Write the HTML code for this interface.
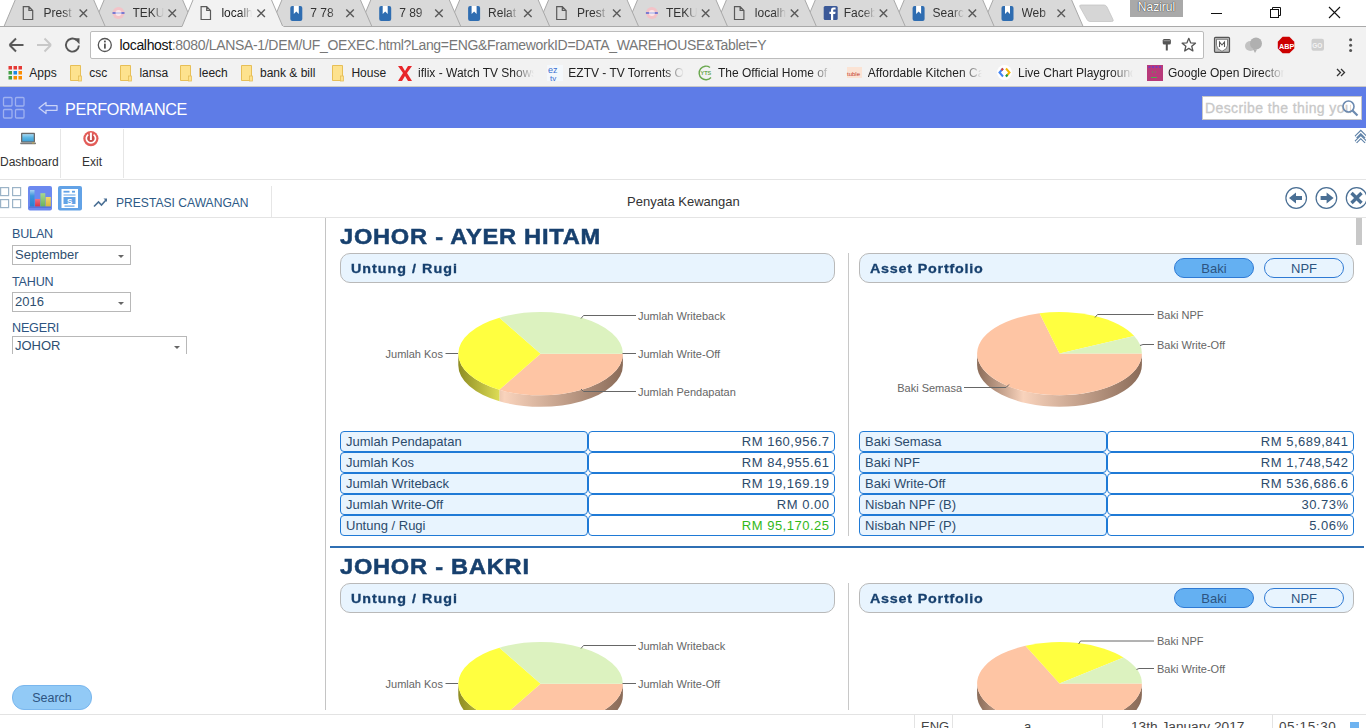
<!DOCTYPE html><html><head><meta charset="utf-8"><style>*{box-sizing:border-box;margin:0;padding:0}
html,body{width:1366px;height:728px;overflow:hidden;background:#fff;font-family:"Liberation Sans",sans-serif;position:relative}
.a{position:absolute}
#tabs{position:absolute;left:0;top:0;width:1366px;height:27px;background:#fff}
.tt{position:absolute;top:6px;font-size:12px;color:#333;white-space:nowrap;overflow:hidden;-webkit-mask-image:linear-gradient(to right,#000 62%,transparent 100%)}
.tx{position:absolute;top:8px}
#toolbar{position:absolute;left:0;top:27px;width:1366px;height:60px;background:#f2f2f2;border-bottom:1px solid #c9c9c9}
#omni{position:absolute;left:90px;top:31px;width:1114px;height:28px;background:#fff;border:1px solid #bcbcbc;border-radius:2px}
.bm{position:absolute;top:66px;font-size:12px;color:#222;white-space:nowrap}
.fold{position:absolute;top:66px;width:12px;height:14px;background:#fbe08a;border:1px solid #e0b84a;border-radius:1px}
#hdr{position:absolute;left:0;top:87px;width:1366px;height:41px;background:#5e7ce7}
#tb2{position:absolute;left:0;top:128px;width:1366px;height:52px;background:#fff;border-bottom:1px solid #e4e4e4}
#bar{position:absolute;left:0;top:180px;width:1366px;height:38px;background:#fff;border-bottom:1px solid #e4e4e4}
#left{position:absolute;left:0;top:218px;width:326px;height:492px;background:#fff;border-right:1px solid #c4c4c4}
#status{position:absolute;left:0;top:714px;width:1366px;height:14px;background:#fff;border-top:1px solid #e3e3e3;overflow:hidden}
.lbl{position:absolute;left:12px;font-size:12.6px;letter-spacing:-0.2px;color:#2d5481;white-space:nowrap}
.sel{position:absolute;left:12px;height:20px;border:1px solid #b8b8b8;background:#fff;font-size:13px;color:#2f4f70;padding:1px 0 0 2px;white-space:nowrap}
.sel:after{content:"";position:absolute;right:6px;top:9px;border-left:3px solid transparent;border-right:3px solid transparent;border-top:3px solid #666}
.ttl{position:absolute;font-size:21.5px;font-weight:bold;color:#17406e;white-space:nowrap;letter-spacing:0.68px;line-height:25px;-webkit-text-stroke:0.5px #17406e;transform:scaleX(1.1);transform-origin:0 0}
.ph{position:absolute;height:30px;background:#e8f4fe;border:1px solid #b9b9b9;border-radius:10px}
.ph span{position:absolute;top:7px;font-size:13px;font-weight:bold;color:#17406e;white-space:nowrap;letter-spacing:0.6px;line-height:15px;-webkit-text-stroke:0.3px #17406e;transform:scaleX(1.1);transform-origin:0 0}
.bt{position:absolute;top:4px;width:80px;height:20px;border:1px solid #2f7ad4;border-radius:10px;font-size:13px;color:#2d5481;text-align:center;line-height:20px;background:transparent}
.bt.on{background:#64b0f2}
.vdiv{position:absolute;width:1px;background:#c8c8c8}
.cell{position:absolute;height:21px;border:1px solid #1f7ad6;border-radius:4px;font-size:13px;color:#2c4b6c;padding:0 0 0 5px;line-height:19px;white-space:nowrap}
.cl{background:#e8f4fe}
.cr{background:#fff;text-align:right;padding:0 4.5px 0 0;letter-spacing:0.5px}
.cr.g{color:#32b81a}
.pl{position:absolute;font-size:11px;color:#666;white-space:nowrap;line-height:13px}
#content{position:absolute;left:0;top:0;width:1366px;height:710px;overflow:hidden}
</style></head><body>
<div id="tabs"></div><div id="toolbar"></div>
<svg class="a" style="left:0;top:0" width="1366" height="27"><path d="M981.9,26.5 L993.5,-1 L1071.2,-1 L1083.1,26.5" fill="#d9d9d9" stroke="#a9a9a9" stroke-width="1"/><path d="M893.0,26.5 L904.6,-1 L982.3,-1 L994.2,26.5" fill="#d9d9d9" stroke="#a9a9a9" stroke-width="1"/><path d="M804.1,26.5 L815.7,-1 L893.4,-1 L905.3,26.5" fill="#d9d9d9" stroke="#a9a9a9" stroke-width="1"/><path d="M715.2,26.5 L726.8,-1 L804.5,-1 L816.4,26.5" fill="#d9d9d9" stroke="#a9a9a9" stroke-width="1"/><path d="M626.3,26.5 L637.9,-1 L715.6,-1 L727.5,26.5" fill="#d9d9d9" stroke="#a9a9a9" stroke-width="1"/><path d="M537.4,26.5 L549.0,-1 L626.7,-1 L638.6,26.5" fill="#d9d9d9" stroke="#a9a9a9" stroke-width="1"/><path d="M448.5,26.5 L460.1,-1 L537.8,-1 L549.7,26.5" fill="#d9d9d9" stroke="#a9a9a9" stroke-width="1"/><path d="M359.6,26.5 L371.2,-1 L448.9,-1 L460.8,26.5" fill="#d9d9d9" stroke="#a9a9a9" stroke-width="1"/><path d="M270.7,26.5 L282.3,-1 L360.0,-1 L371.9,26.5" fill="#d9d9d9" stroke="#a9a9a9" stroke-width="1"/><path d="M92.9,26.5 L104.5,-1 L182.2,-1 L194.1,26.5" fill="#d9d9d9" stroke="#a9a9a9" stroke-width="1"/><path d="M4.0,26.5 L15.6,-1 L93.3,-1 L105.2,26.5" fill="#d9d9d9" stroke="#a9a9a9" stroke-width="1"/><line x1="0" y1="26.5" x2="1366" y2="26.5" stroke="#a9a9a9" stroke-width="1"/><path d="M181.8,27 L193.4,-1 L271.1,-1 L283.0,27 Z" fill="#f2f2f2" stroke="#a9a9a9" stroke-width="1"/><rect x="182.4" y="26" width="101" height="2" fill="#f2f2f2"/><path d="M1081,5 L1104,5 Q1106,5 1107,7 L1113,19.5 Q1114,21.5 1111.5,21.5 L1090,21.5 Q1088,21.5 1087,19.5 L1080,7 Q1079,5 1081,5 Z" fill="#d6d6d6" stroke="#c4c4c4" stroke-width="0.8"/><path d="M23.3,6.6 h5.6 l3.8,3.8 v9.1 h-9.4 Z M28.9,6.6 v3.8 h3.8" fill="none" stroke="#5a5a5a" stroke-width="1.2"/><path d="M79.6,9.5 l7.5,7.5 M87.1,9.5 l-7.5,7.5" stroke="#5a5a5a" stroke-width="1.4"/><circle cx="118.5" cy="13" r="6" fill="#f3c3c8"/><path d="M112.5,13 h12" stroke="#7a7ad0" stroke-width="2"/><circle cx="118.5" cy="13" r="3" fill="#fff" opacity="0.6"/><path d="M168.5,9.5 l7.5,7.5 M176.0,9.5 l-7.5,7.5" stroke="#5a5a5a" stroke-width="1.4"/><path d="M201.1,6.6 h5.6 l3.8,3.8 v9.1 h-9.4 Z M206.7,6.6 v3.8 h3.8" fill="none" stroke="#5a5a5a" stroke-width="1.2"/><path d="M257.4,9.5 l7.5,7.5 M264.9,9.5 l-7.5,7.5" stroke="#5a5a5a" stroke-width="1.4"/><rect x="290.3" y="6" width="12" height="15" rx="2" fill="#2f6db1"/><path d="M293.8,6 v8 l2.5,-2.5 l2.5,2.5 v-8" fill="#fff"/><path d="M346.3,9.5 l7.5,7.5 M353.8,9.5 l-7.5,7.5" stroke="#5a5a5a" stroke-width="1.4"/><rect x="379.2" y="6" width="12" height="15" rx="2" fill="#2f6db1"/><path d="M382.7,6 v8 l2.5,-2.5 l2.5,2.5 v-8" fill="#fff"/><path d="M435.2,9.5 l7.5,7.5 M442.7,9.5 l-7.5,7.5" stroke="#5a5a5a" stroke-width="1.4"/><rect x="468.1" y="6" width="12" height="15" rx="2" fill="#2f6db1"/><path d="M471.6,6 v8 l2.5,-2.5 l2.5,2.5 v-8" fill="#fff"/><path d="M524.1,9.5 l7.5,7.5 M531.6,9.5 l-7.5,7.5" stroke="#5a5a5a" stroke-width="1.4"/><path d="M556.7,6.6 h5.6 l3.8,3.8 v9.1 h-9.4 Z M562.3,6.6 v3.8 h3.8" fill="none" stroke="#5a5a5a" stroke-width="1.2"/><path d="M613.0,9.5 l7.5,7.5 M620.5,9.5 l-7.5,7.5" stroke="#5a5a5a" stroke-width="1.4"/><circle cx="651.9" cy="13" r="6" fill="#f3c3c8"/><path d="M645.9,13 h12" stroke="#7a7ad0" stroke-width="2"/><circle cx="651.9" cy="13" r="3" fill="#fff" opacity="0.6"/><path d="M701.9,9.5 l7.5,7.5 M709.4,9.5 l-7.5,7.5" stroke="#5a5a5a" stroke-width="1.4"/><path d="M734.5,6.6 h5.6 l3.8,3.8 v9.1 h-9.4 Z M740.1,6.6 v3.8 h3.8" fill="none" stroke="#5a5a5a" stroke-width="1.2"/><path d="M790.8,9.5 l7.5,7.5 M798.3,9.5 l-7.5,7.5" stroke="#5a5a5a" stroke-width="1.4"/><rect x="823.7" y="6" width="14" height="14" rx="1.5" fill="#3b5998"/><path d="M833.2,20 v-6 h2 l0.4,-2.2 h-2.4 v-1.4 c0,-0.7 0.3,-1 1,-1 h1.4 v-2 h-2 c-2,0 -2.6,1.2 -2.6,2.8 v1.6 h-1.6 v2.2 h1.6 v6 Z" fill="#fff"/><path d="M879.7,9.5 l7.5,7.5 M887.2,9.5 l-7.5,7.5" stroke="#5a5a5a" stroke-width="1.4"/><rect x="912.6" y="6" width="12" height="15" rx="2" fill="#2f6db1"/><path d="M916.1,6 v8 l2.5,-2.5 l2.5,2.5 v-8" fill="#fff"/><path d="M968.6,9.5 l7.5,7.5 M976.1,9.5 l-7.5,7.5" stroke="#5a5a5a" stroke-width="1.4"/><rect x="1001.5" y="6" width="12" height="15" rx="2" fill="#2f6db1"/><path d="M1005.0,6 v8 l2.5,-2.5 l2.5,2.5 v-8" fill="#fff"/><path d="M1057.5,9.5 l7.5,7.5 M1065.0,9.5 l-7.5,7.5" stroke="#5a5a5a" stroke-width="1.4"/><rect x="1130" y="0" width="53" height="17" fill="#a9a9a9"/><path d="M1211,13.5 h11" stroke="#111" stroke-width="1"/><rect x="1270.5" y="9.5" width="8" height="8" fill="none" stroke="#111"/><path d="M1272.5,9.5 v-2 h8 v8 h-2" fill="none" stroke="#111"/><path d="M1329,7 l11,11 M1340,7 l-11,11" stroke="#111" stroke-width="1.1"/></svg>
<div class="tt" style="left:43.6px;width:31px;color:#333">Prest</div>
<div class="tt" style="left:132.5px;width:31px;color:#333">TEKU</div>
<div class="tt" style="left:221.4px;width:31px;color:#222">localh</div>
<div class="tt" style="left:310.3px;width:31px;color:#333">7 78</div>
<div class="tt" style="left:399.2px;width:31px;color:#333">7 89</div>
<div class="tt" style="left:488.1px;width:31px;color:#333">Relat</div>
<div class="tt" style="left:577.0px;width:31px;color:#333">Prest</div>
<div class="tt" style="left:665.9px;width:31px;color:#333">TEKU</div>
<div class="tt" style="left:754.8px;width:31px;color:#333">localh</div>
<div class="tt" style="left:843.7px;width:31px;color:#333">Faceb</div>
<div class="tt" style="left:932.6px;width:31px;color:#333">Searc</div>
<div class="tt" style="left:1021.5px;width:31px;color:#333">Web</div>
<div class="a" style="left:1130px;top:1px;width:53px;text-align:center;font-size:12px;line-height:13px;color:#fff;white-space:nowrap;text-shadow:0 0 1px #333,0 0 1px #333">Nazirul</div>
<svg class="a" style="left:0;top:27px" width="1366" height="60"><path d="M9.5,18 h14 M9.5,18 l6.5,-6.5 M9.5,18 l6.5,6.5" stroke="#5a5a5a" stroke-width="2" fill="none"/><path d="M37,18 h14 M51,18 l-6.5,-6.5 M51,18 l-6.5,6.5" stroke="#c8c8c8" stroke-width="2" fill="none"/><path d="M78.9,18.5 A6.5,6.5 0 1 1 76.5,13" stroke="#555" stroke-width="1.9" fill="none"/><path d="M73.6,11.3 h5.9 v5.9 Z" fill="#555"/></svg>
<div id="omni"></div>
<svg class="a" style="left:0;top:27px" width="1366" height="60"><circle cx="104.8" cy="18" r="6.5" fill="none" stroke="#555" stroke-width="1.3"/><rect x="104" y="16.6" width="1.8" height="5" fill="#555"/><rect x="104" y="13.6" width="1.8" height="1.8" fill="#555"/><rect x="1162.7" y="12" width="8.2" height="5.5" rx="1.5" fill="#555"/><rect x="1165.8" y="17" width="2" height="6.5" fill="#555"/><rect x="1163.5" y="13.2" width="6.5" height="1" fill="#999"/><polygon points="1188.80,11.30 1190.62,15.79 1195.46,16.14 1191.75,19.26 1192.91,23.96 1188.80,21.40 1184.69,23.96 1185.85,19.26 1182.14,16.14 1186.98,15.79" fill="none" stroke="#555" stroke-width="1.3" stroke-linejoin="round"/><rect x="1214.5" y="10.3" width="15" height="15" rx="1" fill="#bbb" stroke="#555" stroke-width="1.2"/><path d="M1216.5,12.3 h11 v6 q0,4 -5.5,6 q-5.5,-2 -5.5,-6 Z" fill="#fff" stroke="#666" stroke-width="0.8"/><path d="M1219.5,20 v-5 l2.5,3 l2.5,-3 v5" stroke="#555" fill="none" stroke-width="1.1"/><ellipse cx="1250.5" cy="19" rx="5.5" ry="5" fill="#c2c2c2"/><circle cx="1256" cy="16.5" r="6" fill="#b0b0b0"/><path d="M1253,22 l2,4 l2,-3.5 Z" fill="#b0b0b0"/><polygon points="1282.6,9.8 1289.4,9.8 1294.3,14.7 1294.3,21.5 1289.4,26.3 1282.6,26.3 1277.8,21.5 1277.8,14.7" fill="#cc0000"/><text x="1279" y="21.5" font-size="7.2" font-weight="bold" fill="#fff" font-family="Liberation Sans">ABP</text><rect x="1311.5" y="11.8" width="12.5" height="12" rx="2" fill="#cfcfcf"/><text x="1312.3" y="20.5" font-size="6.5" font-weight="bold" fill="#f4f4f4" font-family="Liberation Sans">GO</text><circle cx="1350.6" cy="12.7" r="1.5" fill="#555"/><circle cx="1350.6" cy="18.2" r="1.5" fill="#555"/><circle cx="1350.6" cy="23.4" r="1.5" fill="#555"/><rect x="8.5" y="39" width="3.5" height="3.5" fill="#e53935"/><rect x="13.5" y="39" width="3.5" height="3.5" fill="#e53935"/><rect x="18.5" y="39" width="3.5" height="3.5" fill="#e53935"/><rect x="8.5" y="44" width="3.5" height="3.5" fill="#43a047"/><rect x="13.5" y="44" width="3.5" height="3.5" fill="#1e88e5"/><rect x="18.5" y="44" width="3.5" height="3.5" fill="#fb8c00"/><rect x="8.5" y="49" width="3.5" height="3.5" fill="#43a047"/><rect x="13.5" y="49" width="3.5" height="3.5" fill="#fb8c00"/><rect x="18.5" y="49" width="3.5" height="3.5" fill="#fb8c00"/><path d="M70.5,38.5 h10 v15 h-10 Z" fill="#fde28e" stroke="#e7bf57" stroke-width="1"/><rect x="78.5" y="49" width="3" height="5" fill="#fde28e" stroke="#e7bf57" stroke-width="0.8"/><path d="M120.5,38.5 h10 v15 h-10 Z" fill="#fde28e" stroke="#e7bf57" stroke-width="1"/><rect x="128.5" y="49" width="3" height="5" fill="#fde28e" stroke="#e7bf57" stroke-width="0.8"/><path d="M180.5,38.5 h10 v15 h-10 Z" fill="#fde28e" stroke="#e7bf57" stroke-width="1"/><rect x="188.5" y="49" width="3" height="5" fill="#fde28e" stroke="#e7bf57" stroke-width="0.8"/><path d="M241.5,38.5 h10 v15 h-10 Z" fill="#fde28e" stroke="#e7bf57" stroke-width="1"/><rect x="249.5" y="49" width="3" height="5" fill="#fde28e" stroke="#e7bf57" stroke-width="0.8"/><path d="M332.5,38.5 h10 v15 h-10 Z" fill="#fde28e" stroke="#e7bf57" stroke-width="1"/><rect x="340.5" y="49" width="3" height="5" fill="#fde28e" stroke="#e7bf57" stroke-width="0.8"/><path d="M398,39 l4,0 l3,5 l3,-5 l4,0 l-5,7 l5,8 l-4,0 l-3,-5 l-3,5 l-4,0 l5,-8 Z" fill="#e8262a"/><rect x="547" y="38" width="16" height="16" fill="#f4f8fc"/><text x="548" y="46" font-size="9" fill="#3a6fd0" font-family="Liberation Sans">ez</text><text x="550" y="54" font-size="8" fill="#3a6fd0" font-family="Liberation Sans">tv</text><path d="M710,40.5 A6.8,6.8 0 1 0 711,50.5" fill="none" stroke="#6aa84f" stroke-width="1.4"/><text x="700.5" y="48" font-size="5.5" font-weight="bold" fill="#6aa84f" font-family="Liberation Sans">YTS</text><rect x="847" y="40" width="15" height="11" fill="#fbe3d4"/><text x="847" y="49" font-size="6" fill="#c0392b" font-family="Liberation Sans">tuble</text><circle cx="1004.5" cy="45.5" r="7.5" fill="#fff"/><path d="M1003,41.5 l-3.5,4 l3.5,4" fill="none" stroke="#4285f4" stroke-width="2"/><path d="M1006,41.5 l3.5,4 l-3.5,4" fill="none" stroke="#f4b400" stroke-width="2"/><path d="M1001.5,43.3 l1.5,-1.8" stroke="#db4437" stroke-width="2"/><path d="M1007.5,47.7 l-1.5,1.8" stroke="#0f9d58" stroke-width="2"/><rect x="1147" y="38" width="16" height="16" fill="#b83a7a"/><path d="M1148.5,40 h13" stroke="#6a3ad0" stroke-width="1.5" stroke-dasharray="2 1.5"/><path d="M1151,50.5 h6" stroke="#4caf50" stroke-width="1"/><path d="M1152,45 h1 M1155,45 h1" stroke="#4caf50" stroke-width="1"/><path d="M1337,42 l3.5,3.5 l-3.5,3.5 M1341,42 l3.5,3.5 l-3.5,3.5" stroke="#333" stroke-width="1.3" fill="none"/></svg>
<div class="a" style="left:119.5px;top:37px;font-size:14px;letter-spacing:-0.33px;color:#777;white-space:nowrap"><span style="color:#111">localhost</span>:8080/LANSA-1/DEM/UF_OEXEC.html?Lang=ENG&amp;FrameworkID=DATA_WAREHOUSE&amp;Tablet=Y</div>
<div class="bm" style="left:29.3px;">Apps</div>
<div class="bm" style="left:89.3px;">csc</div>
<div class="bm" style="left:139.4px;">lansa</div>
<div class="bm" style="left:199.1px;">leech</div>
<div class="bm" style="left:260px;">bank &amp; bill</div>
<div class="bm" style="left:351.4px;">House</div>
<div class="bm" style="left:418px;width:116px;overflow:hidden;-webkit-mask-image:linear-gradient(to right,#000 82%,transparent);">iflix - Watch TV Shows</div>
<div class="bm" style="left:568.3px;width:116px;overflow:hidden;-webkit-mask-image:linear-gradient(to right,#000 82%,transparent);">EZTV - TV Torrents On</div>
<div class="bm" style="left:718px;width:113px;overflow:hidden;-webkit-mask-image:linear-gradient(to right,#000 82%,transparent);">The Official Home of Y</div>
<div class="bm" style="left:867.8px;width:114px;overflow:hidden;-webkit-mask-image:linear-gradient(to right,#000 82%,transparent);">Affordable Kitchen Ca</div>
<div class="bm" style="left:1018px;width:115px;overflow:hidden;-webkit-mask-image:linear-gradient(to right,#000 82%,transparent);">Live Chart Playground</div>
<div class="bm" style="left:1168px;width:116px;overflow:hidden;-webkit-mask-image:linear-gradient(to right,#000 82%,transparent);">Google Open Director</div>
<div id="hdr"></div>
<svg class="a" style="left:0;top:87px" width="1366" height="41">
<g fill="none" stroke="#9fb1f0" stroke-width="1.3">
<rect x="3.5" y="10.5" width="8.5" height="8.5" rx="1"/><rect x="15.5" y="10.5" width="8.5" height="8.5" rx="1"/>
<rect x="3.5" y="22.5" width="8.5" height="8.5" rx="1"/><rect x="15.5" y="22.5" width="8.5" height="8.5" rx="1"/>
</g>
<path d="M39,21 l7,-5.5 v3.2 h11 v4.6 h-11 v3.2 Z" fill="none" stroke="#c9d3f7" stroke-width="1.3" stroke-linejoin="round"/>
</svg>
<div class="a" style="left:65px;top:99.5px;font-size:16.2px;letter-spacing:-0.35px;color:#fff;white-space:nowrap;line-height:18px">PERFORMANCE</div>
<div class="a" style="left:1202px;top:96px;width:160px;height:24px;background:#fff;border:1px solid #c8c8c8"></div>
<div class="a" style="left:1205px;top:100px;font-size:14px;letter-spacing:0.4px;-webkit-text-stroke:0.3px #c8c8c8;color:#c8c8c8;white-space:nowrap;width:146px;overflow:hidden;line-height:16px">Describe the thing you</div>
<svg class="a" style="left:1338px;top:97px" width="24" height="22"><circle cx="10.5" cy="9.5" r="5.5" fill="none" stroke="#6c8ab0" stroke-width="1.6"/><path d="M14.5,13.5 l5,5" stroke="#6c8ab0" stroke-width="2.2"/></svg>
<div id="tb2"></div>
<div class="a" style="left:60px;top:129px;width:1px;height:49px;background:#e6e6e6"></div>
<div class="a" style="left:123px;top:129px;width:1px;height:49px;background:#e6e6e6"></div>
<svg class="a" style="left:0;top:128px" width="130" height="22">
<defs><linearGradient id="scr" x1="0" y1="0" x2="0" y2="1"><stop offset="0" stop-color="#a6d8f2"/><stop offset="0.5" stop-color="#5ab6e4"/><stop offset="1" stop-color="#3fa0d6"/></linearGradient></defs>
<rect x="21" y="4.8" width="14" height="9.6" rx="0.8" fill="#6a6a6a"/><rect x="22.3" y="6.1" width="11.4" height="7.3" fill="url(#scr)"/><rect x="20.2" y="14.4" width="15.8" height="1.9" rx="0.8" fill="#7a7a7a"/><rect x="32" y="14.6" width="2.5" height="0.8" fill="#c8b040"/>
<circle cx="90.9" cy="10.6" r="7.6" fill="#e35c58"/><circle cx="90.9" cy="10.8" r="4.4" fill="#c94d4a"/><path d="M88.2,6.6 A4.6,4.6 0 1 0 93.6,6.6" fill="none" stroke="#fff" stroke-width="1.7"/><rect x="89.9" y="4.6" width="2" height="7.4" fill="#fff"/>
</svg>
<div class="a" style="left:0px;top:155px;font-size:12px;color:#333;white-space:nowrap;line-height:14px">Dashboard</div>
<div class="a" style="left:82px;top:155px;font-size:12px;color:#333;white-space:nowrap;line-height:14px">Exit</div>
<svg class="a" style="left:1350px;top:128px" width="16" height="18"><g fill="none" stroke-linejoin="miter"><path d="M5.8,9 l5,-5 l5,5 M5.8,14 l5,-5 l5,5" stroke="#5f82a8" stroke-width="3.4"/><path d="M5.8,9 l5,-5 l5,5 M5.8,14 l5,-5 l5,5" stroke="#fff" stroke-width="1.2"/></g></svg>
<div id="bar"></div>
<svg class="a" style="left:0;top:180px" width="280" height="38">
<g fill="none" stroke="#9bb3c7" stroke-width="1.2"><rect x="0.6" y="7.6" width="8" height="8" /><rect x="12.6" y="7.6" width="8" height="8"/><rect x="0.6" y="19.6" width="8" height="8"/><rect x="12.6" y="19.6" width="8" height="8"/></g>
<rect x="28" y="6" width="24" height="24.5" rx="2" fill="#6c89ef"/>
<defs><linearGradient id="bb" x1="0" y1="0" x2="0" y2="1"><stop offset="0" stop-color="#a9d0f0"/><stop offset="0.35" stop-color="#3d95dc"/><stop offset="1" stop-color="#2a7fcf"/></linearGradient>
<linearGradient id="br" x1="0" y1="0" x2="0" y2="1"><stop offset="0" stop-color="#f07080"/><stop offset="1" stop-color="#d43345"/></linearGradient>
<linearGradient id="bg2" x1="0" y1="0" x2="0" y2="1"><stop offset="0" stop-color="#a8d890"/><stop offset="1" stop-color="#6ab35a"/></linearGradient>
<linearGradient id="by" x1="0" y1="0" x2="0" y2="1"><stop offset="0" stop-color="#f0d870"/><stop offset="1" stop-color="#d9b43c"/></linearGradient></defs>
<rect x="30" y="10" width="4.5" height="16.6" fill="url(#bb)"/><rect x="35.1" y="19" width="4.9" height="7.6" fill="url(#br)"/><rect x="40.4" y="13.2" width="4.9" height="13.4" fill="url(#bg2)"/><rect x="45.7" y="17" width="5.1" height="9.6" fill="url(#by)"/>
<rect x="29" y="26.6" width="22" height="1.2" fill="#5070d8"/>
<rect x="58" y="6" width="24" height="24.5" rx="2" fill="#62a2e6"/>
<rect x="61.5" y="9" width="16.5" height="19" fill="#fff"/>
<rect x="63.5" y="10.8" width="6" height="1.8" fill="#62a2e6"/><rect x="72" y="10.8" width="3" height="1.8" fill="#62a2e6"/>
<rect x="63.5" y="14.5" width="12" height="1" fill="#62a2e6"/>
<rect x="63.5" y="17" width="12" height="7" fill="#62a2e6"/><text x="67" y="23.5" font-size="8" fill="#fff" font-family="Liberation Sans" font-weight="bold">S</text>
<rect x="64.5" y="25.5" width="10" height="1.2" fill="#62a2e6"/>
<path d="M94,26.5 l4.5,-4.5 l3,3 l4.5,-5" fill="none" stroke="#4a6f94" stroke-width="1.6"/><path d="M103.5,18.5 h3.5 v3.5 Z" fill="#4a6f94"/>
</svg>
<div class="a" style="left:116px;top:196px;font-size:12.1px;color:#2d5a86;white-space:nowrap;line-height:14px">PRESTASI CAWANGAN</div>
<div class="a" style="left:271px;top:186px;width:1px;height:31px;background:#e6e6e6"></div>
<div class="a" style="left:627px;top:193.5px;font-size:13px;color:#333;white-space:nowrap;line-height:15px">Penyata Kewangan</div>
<svg class="a" style="left:1280px;top:184px" width="86" height="28">
<g fill="none" stroke="#4a6f94" stroke-width="1.2"><circle cx="16.2" cy="14" r="10.3"/><circle cx="46.4" cy="14" r="10.3"/><circle cx="76.6" cy="14" r="10.3"/></g>
<path d="M9,14 l7,-5.6 v3.6 h6 v4 h-6 v3.6 Z" fill="#4a6f94"/>
<path d="M53.6,14 l-7,-5.6 v3.6 h-6 v4 h6 v3.6 Z" fill="#4a6f94"/>
<path d="M71.5,9 l10,10 M81.5,9 l-10,10" stroke="#4a6f94" stroke-width="3.4"/>
</svg>
<div id="left"></div>
<div class="lbl" style="left:12px;top:227px">BULAN</div>
<div class="sel" style="left:12px;top:245px;width:119px;height:20px">September</div>
<div class="lbl" style="left:12px;top:274.5px">TAHUN</div>
<div class="sel" style="left:12px;top:292px;width:119px;height:20px">2016</div>
<div class="lbl" style="left:12px;top:320.5px">NEGERI</div>
<div class="sel" style="left:12px;top:336px;width:175px;height:18px;border-bottom:none">JOHOR</div>
<div class="a" style="left:12px;top:685px;width:80px;height:25px;background:#92caf6;border:1px solid #7ab7ee;border-radius:12px;font-size:12.5px;color:#2d5481;text-align:center;line-height:25px">Search</div>

<div id="content">
<div class="ttl" style="left:340px;top:225px">JOHOR - AYER HITAM</div>
<div class="ph" style="left:340px;top:253px;width:495px"><span style="left:10px;top:7px;letter-spacing:0.92px">Untung / Rugi</span></div>
<div class="ph" style="left:859px;top:253px;width:495px"><span style="left:9.5px;letter-spacing:0.72px">Asset Portfolio</span><div class="bt on" style="left:314px">Baki</div><div class="bt" style="left:404px">NPF</div></div>
<div class="vdiv" style="left:848px;top:253px;height:283px"></div>
<svg class="a" style="left:0;top:0px" width="1366" height="450" viewBox="0 0 1366 450"><defs><linearGradient id="p0as0" gradientUnits="userSpaceOnUse" x1="458.3" y1="0" x2="622.9" y2="0"><stop offset="0" stop-color="#8a6b58"/><stop offset="0.28" stop-color="#f9d3bc"/><stop offset="1" stop-color="#8a6b58"/></linearGradient><linearGradient id="p0as1" gradientUnits="userSpaceOnUse" x1="458.3" y1="0" x2="622.9" y2="0"><stop offset="0" stop-color="#8e8c22"/><stop offset="0.28" stop-color="#e6e65c"/><stop offset="1" stop-color="#8e8c22"/></linearGradient></defs><path d="M622.90,353.70 A82.3,41.6 0 0 1 499.45,389.73 L499.45,401.23 A82.3,41.6 0 0 0 622.90,365.20 Z" fill="url(#p0as0)"/><path d="M499.45,389.73 A82.3,41.6 0 0 1 458.30,353.70 L458.30,365.20 A82.3,41.6 0 0 0 499.45,401.23 Z" fill="url(#p0as1)"/><path d="M540.60,353.70 L622.90,353.70 A82.3,41.6 0 0 1 499.45,389.73 Z" fill="#fec5a4"/><path d="M540.60,353.70 L499.45,389.73 A82.3,41.6 0 0 1 499.45,317.67 Z" fill="#ffff40"/><path d="M540.60,353.70 L499.45,317.67 A82.3,41.6 0 0 1 622.90,353.70 Z" fill="#dcf2bf"/><defs><linearGradient id="p0bs0" gradientUnits="userSpaceOnUse" x1="977.1" y1="0" x2="1141.9" y2="0"><stop offset="0" stop-color="#8a6b58"/><stop offset="0.28" stop-color="#f9d3bc"/><stop offset="1" stop-color="#8a6b58"/></linearGradient></defs><path d="M1141.90,353.60 A82.4,41.6 0 0 1 977.10,353.60 L977.10,365.10 A82.4,41.6 0 0 0 1141.90,365.10 Z" fill="url(#p0bs0)"/><path d="M1059.50,353.60 L1141.90,353.60 A82.4,41.6 0 1 1 1039.57,313.24 Z" fill="#fec5a4"/><path d="M1059.50,353.60 L1039.57,313.24 A82.4,41.6 0 0 1 1134.18,336.02 Z" fill="#ffff40"/><path d="M1059.50,353.60 L1134.18,336.02 A82.4,41.6 0 0 1 1141.90,353.60 Z" fill="#dcf2bf"/><polyline points="581,318.5 583.5,315.5 636,315.5" fill="none" stroke="#666" stroke-width="1"/><polyline points="622.5,353.5 636,353.5" fill="none" stroke="#666" stroke-width="1"/><polyline points="581,389 583.5,391.5 636,391.5" fill="none" stroke="#666" stroke-width="1"/><polyline points="445.5,353.5 458,353.5" fill="none" stroke="#666" stroke-width="1"/><polyline points="1095,317.5 1097.5,314.5 1154,314.5" fill="none" stroke="#666" stroke-width="1"/><polyline points="1140,345.5 1143,344.5 1154,344.5" fill="none" stroke="#666" stroke-width="1"/><polyline points="1009,384.5 1006,387.5 964,387.5" fill="none" stroke="#666" stroke-width="1"/></svg>
<div class="pl" style="left:638px;top:310.0px">Jumlah Writeback</div>
<div class="pl" style="left:638px;top:348.0px">Jumlah Write-Off</div>
<div class="pl" style="left:638px;top:386.0px">Jumlah Pendapatan</div>
<div class="pl" style="right:923px;top:348.0px">Jumlah Kos</div>
<div class="pl" style="left:1157px;top:309.0px">Baki NPF</div>
<div class="pl" style="left:1157px;top:339.0px">Baki Write-Off</div>
<div class="pl" style="right:404px;top:382.0px">Baki Semasa</div>
<div class="cell cl" style="left:340px;top:431px;width:248px">Jumlah Pendapatan</div>
<div class="cell cr " style="left:588px;top:431px;width:247px">RM 160,956.7</div>
<div class="cell cl" style="left:340px;top:452px;width:248px">Jumlah Kos</div>
<div class="cell cr " style="left:588px;top:452px;width:247px">RM 84,955.61</div>
<div class="cell cl" style="left:340px;top:473px;width:248px">Jumlah Writeback</div>
<div class="cell cr " style="left:588px;top:473px;width:247px">RM 19,169.19</div>
<div class="cell cl" style="left:340px;top:494px;width:248px">Jumlah Write-Off</div>
<div class="cell cr " style="left:588px;top:494px;width:247px">RM 0.00</div>
<div class="cell cl" style="left:340px;top:515px;width:248px">Untung / Rugi</div>
<div class="cell cr g" style="left:588px;top:515px;width:247px">RM 95,170.25</div>
<div class="cell cl" style="left:859px;top:431px;width:248px">Baki Semasa</div>
<div class="cell cr" style="left:1107px;top:431px;width:247px">RM 5,689,841</div>
<div class="cell cl" style="left:859px;top:452px;width:248px">Baki NPF</div>
<div class="cell cr" style="left:1107px;top:452px;width:247px">RM 1,748,542</div>
<div class="cell cl" style="left:859px;top:473px;width:248px">Baki Write-Off</div>
<div class="cell cr" style="left:1107px;top:473px;width:247px">RM 536,686.6</div>
<div class="cell cl" style="left:859px;top:494px;width:248px">Nisbah NPF (B)</div>
<div class="cell cr" style="left:1107px;top:494px;width:247px">30.73%</div>
<div class="cell cl" style="left:859px;top:515px;width:248px">Nisbah NPF (P)</div>
<div class="cell cr" style="left:1107px;top:515px;width:247px">5.06%</div>
<div class="a" style="left:330px;top:546px;width:1034px;height:2px;background:#2f6fb3"></div>
<div class="ttl" style="left:340px;top:555px">JOHOR - BAKRI</div>
<div class="ph" style="left:340px;top:583px;width:495px"><span style="left:10px;top:7px;letter-spacing:0.92px">Untung / Rugi</span></div>
<div class="ph" style="left:859px;top:583px;width:495px"><span style="left:9.5px;letter-spacing:0.72px">Asset Portfolio</span><div class="bt on" style="left:314px">Baki</div><div class="bt" style="left:404px">NPF</div></div>
<div class="vdiv" style="left:848px;top:583px;height:283px"></div>
<svg class="a" style="left:0;top:330px" width="1366" height="450" viewBox="0 0 1366 450"><defs><linearGradient id="p330as0" gradientUnits="userSpaceOnUse" x1="458.3" y1="0" x2="622.9" y2="0"><stop offset="0" stop-color="#8a6b58"/><stop offset="0.28" stop-color="#f9d3bc"/><stop offset="1" stop-color="#8a6b58"/></linearGradient><linearGradient id="p330as1" gradientUnits="userSpaceOnUse" x1="458.3" y1="0" x2="622.9" y2="0"><stop offset="0" stop-color="#8e8c22"/><stop offset="0.28" stop-color="#e6e65c"/><stop offset="1" stop-color="#8e8c22"/></linearGradient></defs><path d="M622.90,353.70 A82.3,41.6 0 0 1 499.45,389.73 L499.45,401.23 A82.3,41.6 0 0 0 622.90,365.20 Z" fill="url(#p330as0)"/><path d="M499.45,389.73 A82.3,41.6 0 0 1 458.30,353.70 L458.30,365.20 A82.3,41.6 0 0 0 499.45,401.23 Z" fill="url(#p330as1)"/><path d="M540.60,353.70 L622.90,353.70 A82.3,41.6 0 0 1 499.45,389.73 Z" fill="#fec5a4"/><path d="M540.60,353.70 L499.45,389.73 A82.3,41.6 0 0 1 499.45,317.67 Z" fill="#ffff40"/><path d="M540.60,353.70 L499.45,317.67 A82.3,41.6 0 0 1 622.90,353.70 Z" fill="#dcf2bf"/><defs><linearGradient id="p330bs0" gradientUnits="userSpaceOnUse" x1="977.1" y1="0" x2="1141.9" y2="0"><stop offset="0" stop-color="#8a6b58"/><stop offset="0.28" stop-color="#f9d3bc"/><stop offset="1" stop-color="#8a6b58"/></linearGradient></defs><path d="M1141.90,353.60 A82.4,41.6 0 0 1 977.10,353.60 L977.10,365.10 A82.4,41.6 0 0 0 1141.90,365.10 Z" fill="url(#p330bs0)"/><path d="M1059.50,353.60 L1141.90,353.60 A82.4,41.6 0 1 1 1025.46,315.72 Z" fill="#fec5a4"/><path d="M1059.50,353.60 L1025.46,315.72 A82.4,41.6 0 0 1 1123.54,327.42 Z" fill="#ffff40"/><path d="M1059.50,353.60 L1123.54,327.42 A82.4,41.6 0 0 1 1141.90,353.60 Z" fill="#dcf2bf"/><polyline points="581,318.5 583.5,315.5 636,315.5" fill="none" stroke="#666" stroke-width="1"/><polyline points="622.5,353.5 636,353.5" fill="none" stroke="#666" stroke-width="1"/><polyline points="581,389 583.5,391.5 636,391.5" fill="none" stroke="#666" stroke-width="1"/><polyline points="445.5,353.5 458,353.5" fill="none" stroke="#666" stroke-width="1"/><polyline points="1078.7,314 1080.5,311 1154,311" fill="none" stroke="#666" stroke-width="1"/><polyline points="1136.5,339.5 1139,338.5 1154,338.5" fill="none" stroke="#666" stroke-width="1"/></svg>
<div class="pl" style="left:638px;top:640.0px">Jumlah Writeback</div>
<div class="pl" style="left:638px;top:678.0px">Jumlah Write-Off</div>
<div class="pl" style="left:638px;top:716.0px">Jumlah Pendapatan</div>
<div class="pl" style="right:923px;top:678.0px">Jumlah Kos</div>
<div class="pl" style="left:1157px;top:634.5px">Baki NPF</div>
<div class="pl" style="left:1157px;top:663.0px">Baki Write-Off</div>
</div>
<div class="a" style="left:1356px;top:218px;width:6px;height:27px;background:#c8c8c8"></div>
<div id="status"></div>
<div class="a" style="left:914px;top:715px;width:1px;height:13px;background:#e3e3e3"></div>
<div class="a" style="left:952px;top:715px;width:1px;height:13px;background:#e3e3e3"></div>
<div class="a" style="left:1102px;top:715px;width:1px;height:13px;background:#e3e3e3"></div>
<div class="a" style="left:1272px;top:715px;width:1px;height:13px;background:#e3e3e3"></div>
<div class="a" style="left:0;top:715px;width:1366px;height:13px;overflow:hidden">
<div class="a" style="left:921px;top:4px;font-size:13px;color:#444;white-space:nowrap">ENG</div>
<div class="a" style="left:1024px;top:4px;font-size:13px;color:#444;white-space:nowrap">a</div>
<div class="a" style="left:1131px;top:4px;font-size:13.7px;color:#444;white-space:nowrap">13th January 2017</div>
<div class="a" style="left:1279px;top:4px;font-size:13.5px;color:#444;white-space:nowrap;letter-spacing:0.6px">05:15:30</div>
<div class="a" style="left:1350px;top:7px;width:9px;height:9px;background:#6eb3f0"></div>
</div>

</body></html>
